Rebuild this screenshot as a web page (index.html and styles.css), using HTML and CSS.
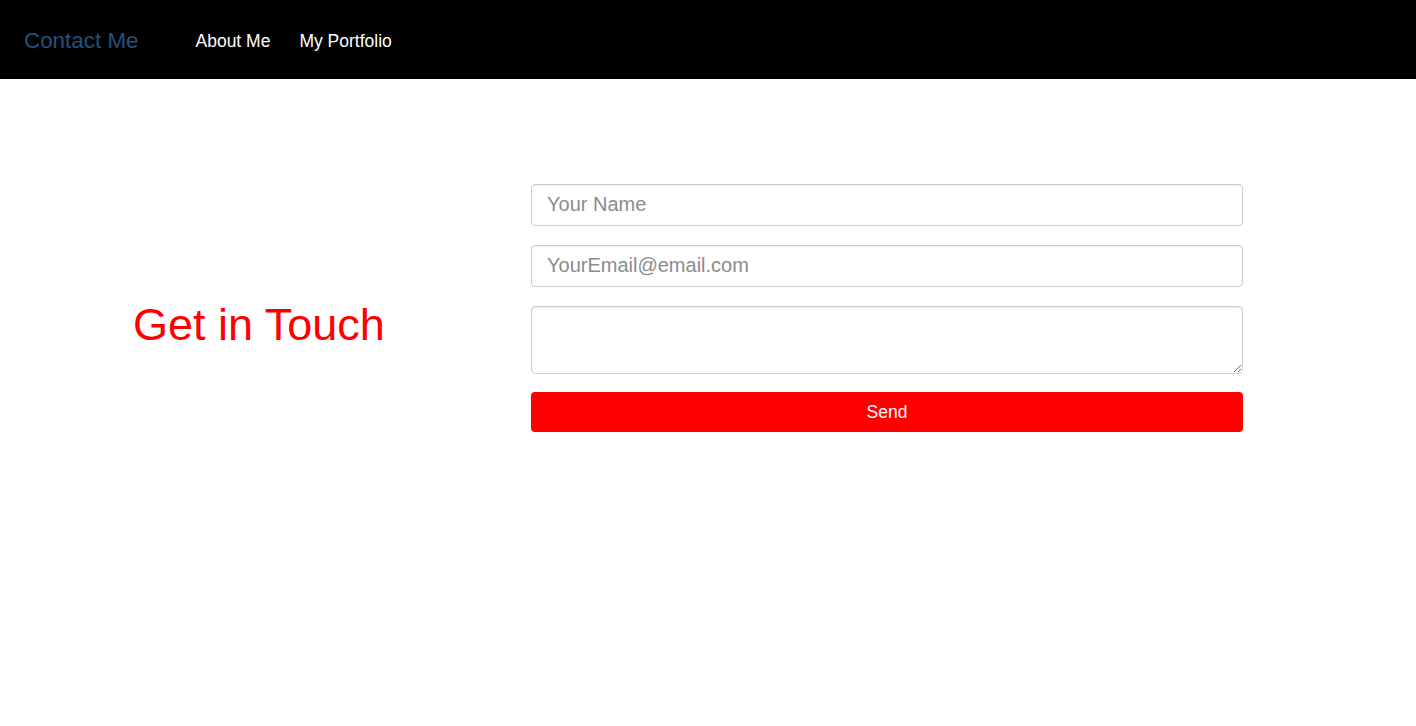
FILE: index.html
```html
<!DOCTYPE html>
<html lang="en">
<head>
<meta charset="utf-8">
<title>Contact Me</title>
<link rel="stylesheet" href="styles.css">
</head>
<body>
<nav class="navbar">
  <a class="brand" href="#">Contact Me</a>
  <ul class="nav-links">
    <li><a href="#">About Me</a></li>
    <li><a href="#">My Portfolio</a></li>
  </ul>
</nav>
<main class="contact">
  <div class="intro">
    <h1 class="title">Get in Touch</h1>
  </div>
  <form class="form">
    <input class="field" type="text" placeholder="Your Name">
    <input class="field" type="email" placeholder="YourEmail@email.com">
    <textarea class="field area"></textarea>
    <button class="send" type="button">Send</button>
  </form>
</main>
</body>
</html>
```
FILE: styles.css
```css
* { box-sizing: border-box; }
html, body { margin: 0; padding: 0; background: #fff; }
body { font-family: "Liberation Sans", Arial, sans-serif; }

.navbar {
  height: 79px;
  background: #000;
  display: flex;
  align-items: center;
  padding: 4px 0 0 24px;
}
.brand {
  font-size: 22.4px;
  color: #23527c;
  text-decoration: none;
  margin-right: 57px;
  line-height: 1;
}
.nav-links {
  list-style: none;
  margin: 0;
  padding: 0;
  display: flex;
  gap: 29px;
}
.nav-links a {
  color: #fff;
  text-decoration: none;
  font-size: 17.5px;
}

.contact {
  display: flex;
  align-items: flex-start;
}
.intro {
  width: 531px;
  padding-left: 133px;
}
.title {
  margin: 221px 0 0;
  font-weight: normal;
  font-size: 45px;
  line-height: 50px;
  color: #ff0000;
}
.form {
  width: 712px;
  margin-top: 105px;
  display: flex;
  flex-direction: column;
}
.field {
  display: block;
  width: 100%;
  height: 42px;
  margin: 0 0 19px;
  padding: 0 16px 2px 15px;
  border: 1px solid #ccc;
  border-radius: 4px;
  box-shadow: inset 0 1px 1px rgba(0,0,0,.075);
  font-family: "Liberation Sans", Arial, sans-serif;
  font-size: 20px;
  color: #555;
  background: #fff;
}
.field::placeholder { color: #8c8c8c; }
.area {
  height: 68px;
  margin-bottom: 18px;
  padding: 8px 16px;
}
.send {
  height: 40px;
  width: 100%;
  border: 0;
  border-radius: 4px;
  background: #ff0000;
  color: #fff;
  font-family: "Liberation Sans", Arial, sans-serif;
  font-size: 17.5px;
}
```
